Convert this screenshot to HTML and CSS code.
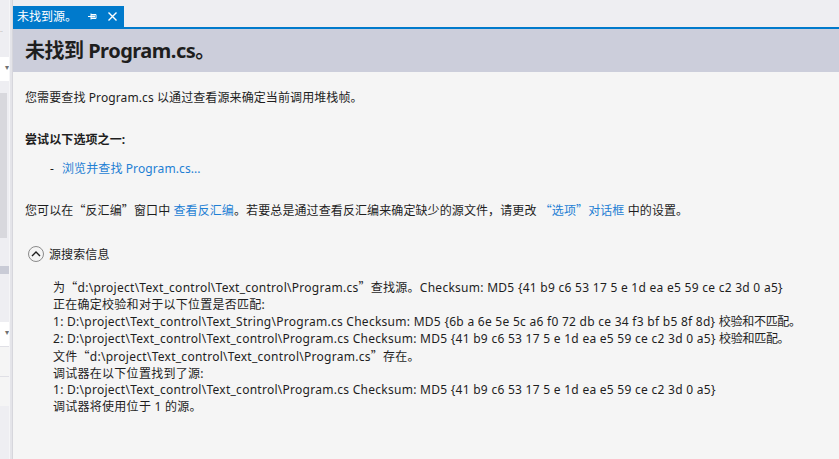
FILE: index.html
```html
<!DOCTYPE html>
<html lang="zh-CN">
<head>
  <meta charset="UTF-8">
  <title>未找到源。</title>
  <link rel="stylesheet" href="styles.css">
</head>
<body>
  <aside class="side">
    <div class="side-dots">· ·</div>
    <div class="side-box"><span class="side-arrow">▾</span></div>
    <div class="side-scroll"></div>
    <div class="side-bar"></div>
    <div class="side-box"><span class="side-arrow">▾</span></div>
    <div class="side-row"></div>
    <div class="side-row"></div>
  </aside>
  <div class="splitter"></div>

  <main class="doc">
    <div class="tabstrip">
      <div class="tab">
        <span class="tab-title">未找到源。</span>
        <svg class="tab-pin" width="9" height="9" viewBox="0 0 9 9">
          <path d="M0 4.5h3M3 1.5v6M3 2.5h5v4H3" fill="none" stroke="#fff" stroke-width="1"/>
          <rect x="3" y="3.5" width="4" height="2" fill="#fff"/>
        </svg>
        <svg class="tab-close" width="9" height="9" viewBox="0 0 9 9">
          <path d="M0.5 0.5l8 8M8.5 0.5l-8 8" stroke="#fff" stroke-width="1.4"/>
        </svg>
      </div>
    </div>
    <div class="header">
      <h1>未找到 Program.cs。</h1>
    </div>

    <section class="content">
      <p class="intro">您需要查找 Program.cs 以通过查看源来确定当前调用堆栈帧。</p>
      <p class="try">尝试以下选项之一:</p>
      <p class="option"><span class="dash">-</span><a href="#">浏览并查找 Program.cs...</a></p>
      <p class="disasm">您可以在<span class="q">“</span>反汇编<span class="q">”</span>窗口中 <a href="#">查看反汇编</a>。若要总是通过查看反汇编来确定缺少的源文件<span class="q">，</span>请更改 <a href="#"><span class="q">“</span>选项<span class="q">”</span>对话框</a> 中的设置。</p>

      <div class="expander">
        <span class="chevron">
          <svg width="10" height="6" viewBox="0 0 10 6"><path d="M1 5l4-4 4 4" fill="none" stroke="#1e1e1e" stroke-width="1.4"/></svg>
        </span>
        <span>源搜索信息</span>
      </div>

      <div class="details">
        <div>为<span class="q">“</span>d:\project\Text_control\Text_control\Program.cs<span class="q">”</span>查找源。Checksum: MD5 {41 b9 c6 53 17 5 e 1d ea e5 59 ce c2 3d 0 a5}</div>
        <div>正在确定校验和对于以下位置是否匹配:</div>
        <div>1: D:\project\Text_control\Text_String\Program.cs Checksum: MD5 {6b a 6e 5e 5c a6 f0 72 db ce 34 f3 bf b5 8f 8d} <span class="verdict">校验和不匹配。</span></div>
        <div>2: D:\project\Text_control\Text_control\Program.cs Checksum: MD5 {41 b9 c6 53 17 5 e 1d ea e5 59 ce c2 3d 0 a5} <span class="verdict">校验和匹配。</span></div>
        <div>文件<span class="q">“</span>d:\project\Text_control\Text_control\Program.cs<span class="q">”</span>存在。</div>
        <div>调试器在以下位置找到了源:</div>
        <div>1: D:\project\Text_control\Text_control\Program.cs Checksum: MD5 {41 b9 c6 53 17 5 e 1d ea e5 59 ce c2 3d 0 a5}</div>
        <div>调试器将使用位于 1 的源。</div>
      </div>
    </section>
  </main>
</body>
</html>
```

FILE: styles.css
```css
:root {
  --vs-blue: #007acc;
  --chrome: #eeeef2;
  --header: #cccedb;
  --page: #f5f5f5;
  --text: #1e1e1e;
  --link: #1e7fd4;
  --fs: 12px;
}
* { box-sizing: border-box; }
html, body { height: 100%; }
body {
  margin: 0;
  display: flex;
  font-family: "Noto Sans", "Noto Sans CJK SC", sans-serif;
  font-size: var(--fs);
  color: var(--text);
  background: var(--chrome);
  overflow: hidden;
}
.q { font-family: "Noto Sans CJK SC", sans-serif; }

/* leftover tool window on the left */
.side {
  width: 9px;
  background: var(--chrome);
  display: flex;
  flex-direction: column;
  overflow: hidden;
}
.side-dots { height: 57px; padding-top: 27px; font-size: 6px; color: #888; letter-spacing: -1px; }
.side-box { height: 24px; background: #fff; position: relative; }
.side-arrow { position: absolute; right: 0; top: 4px; font-size: 8px; color: #717171; }
.side-scroll { height: 145px; margin-top: 12px; background: #d8d8dd; width: 7px; }
.side-bar { height: 8px; margin: 28px 0 48px; background: #c9cbd6; }
.side-row { height: 30px; border-top: 1px solid #e0e0e6; background: #f5f5f5; }
.splitter {
  width: 4px;
  background: #e4e4e9;
  border-left: 1px solid #f5f5f7;
  border-right: 1px solid #d6d6dc;
}

.doc {
  flex: 1;
  display: flex;
  flex-direction: column;
  background: var(--page);
}
.tabstrip {
  background: var(--chrome);
  padding-top: 6px;
  border-bottom: 2px solid var(--vs-blue);
  display: flex;
}
.tab {
  width: 111px;
  height: 21px;
  background: var(--vs-blue);
  color: #fff;
  display: flex;
  align-items: center;
  padding-left: 4px;
}
.tab-title { font-size: 12px; line-height: 1; }
.tab-pin { margin-left: 11px; }
.tab-close { margin-left: 11px; }

.header {
  background: var(--header);
  height: 43px;
  display: flex;
  align-items: center;
  padding-left: 12px;
}
.header h1 {
  margin: 0;
  font-size: 20px;
  font-weight: bold;
  line-height: 1;
  padding-top: 1px;
  letter-spacing: -0.5px;
}

.content { padding: 0 12px; letter-spacing: 0.1px; }
.content p { margin: 0; line-height: 17px; }
.intro { margin-top: 17px !important; }
.try { margin-top: 25px !important; font-weight: bold; }
.option { margin-top: 12px !important; padding-left: 25px; }
.dash { display: inline-block; width: 12px; }
a { color: var(--link); text-decoration: none; }
.disasm { margin-top: 24px !important; }

.expander {
  display: flex;
  align-items: center;
  gap: 5px;
  margin-top: 26px;
  margin-left: 3px;
}
.chevron {
  width: 16px;
  height: 16px;
  border: 1px solid #8a8a8a;
  border-radius: 50%;
  display: flex;
  align-items: center;
  justify-content: center;
  padding-bottom: 1px;
}

.details {
  margin-top: 16px;
  padding-left: 28px;
  line-height: 16.9px;
  white-space: nowrap;
  letter-spacing: 0.27px;
}
.details .verdict { letter-spacing: -0.3px; }
```
